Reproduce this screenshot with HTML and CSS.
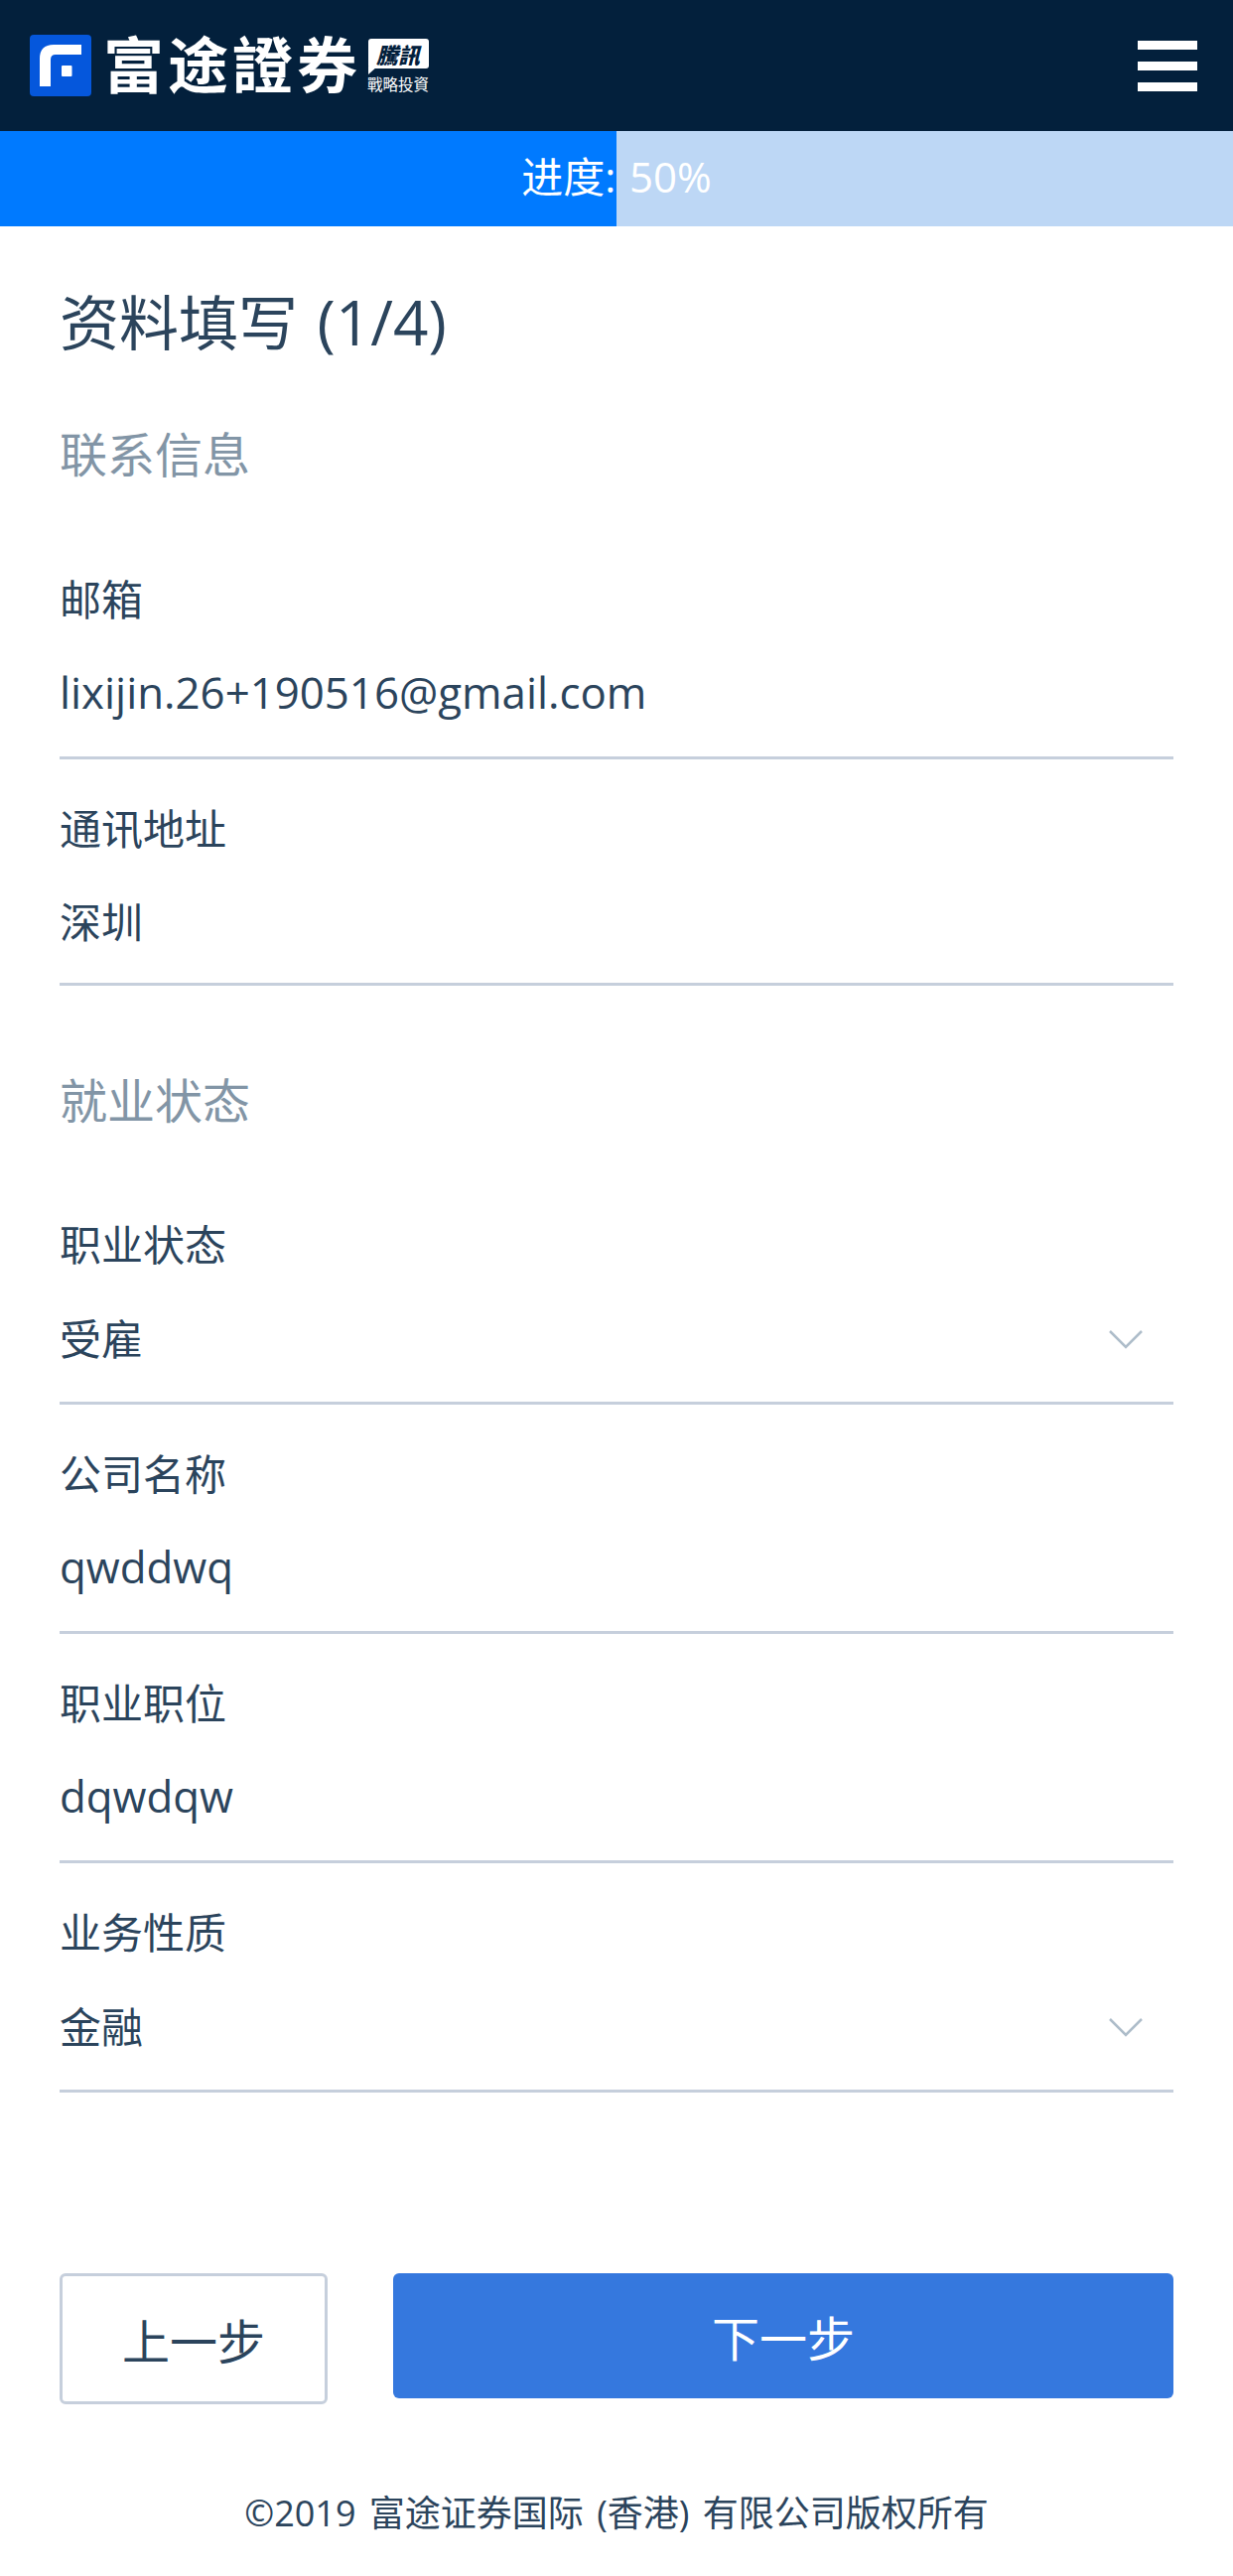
FILE: index.html
```html
<!DOCTYPE html>
<html lang="zh-CN">

<head>
    <meta charset="UTF-8">
    <meta name="viewport" content="width=device-width, initial-scale=1.0">
    <title>资料填写</title>
    <link rel="stylesheet" href="styles.css">
</head>

<body>
    <header class="topbar">
        <div class="brand">
            <svg class="brand-icon" viewBox="0 0 62 62" width="62" height="62">
                <rect width="62" height="62" rx="4" fill="#0557dc" />
                <path d="M10 52V24Q10 10 24 10H52V20H26Q21 20 21 25V52Z" fill="#fff" />
                <rect x="32" y="31" width="10.500" height="11" rx="1" fill="#fff" />
            </svg>
            <span class="brand-name">富途證券</span>
            <div class="brand-tag">
                <span class="tag-bubble">騰訊</span>
                <span class="tag-sub">戰略投資</span>
            </div>
        </div>
        <div class="menu-btn">
            <span></span>
            <span></span>
            <span></span>
        </div>
    </header>

    <div class="progress">进度: 50%</div>

    <main class="content">
        <h1>资料填写 <span class="step">(1/4)</span></h1>

        <h2 class="section-title">联系信息</h2>
        <div class="form-group">
            <label for="email">邮箱</label>
            <input class="latin" type="text" id="email" value="lixijin.26+190516@gmail.com">
        </div>
        <div class="form-group">
            <label for="address">通讯地址</label>
            <input class="short" type="text" id="address" value="深圳">
        </div>

        <h2 class="section-title section-second">就业状态</h2>
        <div class="form-group form-select">
            <label for="job-status">职业状态</label>
            <input type="text" id="job-status" value="受雇" readonly>
            <svg class="chevron" viewBox="0 0 34 19" width="34" height="19">
                <path d="M1 1L17 17L33 1" fill="none" stroke="#aebdca" stroke-width="2.500" />
            </svg>
        </div>
        <div class="form-group">
            <label for="company">公司名称</label>
            <input class="latin" type="text" id="company" value="qwddwq">
        </div>
        <div class="form-group">
            <label for="position">职业职位</label>
            <input class="latin" type="text" id="position" value="dqwdqw">
        </div>
        <div class="form-group form-select">
            <label for="business">业务性质</label>
            <input type="text" id="business" value="金融" readonly>
            <svg class="chevron" viewBox="0 0 34 19" width="34" height="19">
                <path d="M1 1L17 17L33 1" fill="none" stroke="#aebdca" stroke-width="2.500" />
            </svg>
        </div>

        <div class="form-button">
            <button class="btn-prev">上一步</button>
            <button class="btn-next">下一步</button>
        </div>
    </main>

    <footer>©2019 富途证券国际 (香港) 有限公司版权所有</footer>
</body>

</html>
```

FILE: styles.css
```css
:root {
    --text-color: #2b445c;
    --muted-color: #8295a6;
    --line-color: #c6cfdc;
    --blue: #3578de;
}

* {
    margin: 0;
    padding: 0;
    box-sizing: border-box;
}

body {
    font-family: "Open Sans", "Noto Sans CJK SC", sans-serif;
    color: var(--text-color);
    background: #fff;
    width: 1242px;
}

.topbar {
    height: 132px;
    background: #03203c;
    display: flex;
    align-items: center;
    justify-content: space-between;
    padding: 0 36px 0 30px;
}

.brand {
    display: flex;
    align-items: center;
}

.brand-icon {
    display: block;
}

.brand-name {
    margin-left: 12px;
    font-family: "Noto Sans CJK TC", sans-serif;
    font-weight: 700;
    font-size: 61px;
    line-height: 62px;
    letter-spacing: 4px;
    color: #fff;
    transform: translateY(-3px);
}

.brand-tag {
    margin-left: 6px;
    display: flex;
    flex-direction: column;
    align-items: center;
    width: 62px;
    color: #fff;
}

.tag-bubble {
    position: relative;
    width: 61px;
    height: 30px;
    background: #fff;
    border-radius: 3px;
    color: #03203c;
    font-family: "Noto Sans CJK TC", sans-serif;
    font-weight: 900;
    font-style: italic;
    font-size: 22px;
    line-height: 30px;
    text-align: center;
}

.tag-bubble::after {
    content: "";
    position: absolute;
    left: 0;
    top: 28px;
    border-right: 9px solid transparent;
    border-top: 8px solid #fff;
}

.tag-sub {
    margin-top: 6px;
    font-family: "Noto Sans CJK TC", sans-serif;
    font-size: 15.500px;
    line-height: 18px;
    white-space: nowrap;
}

.menu-btn {
    display: flex;
    flex-direction: column;
    gap: 12px;
    width: 60px;
}

.menu-btn span {
    display: block;
    height: 9px;
    background: #fff;
}

.progress {
    height: 96px;
    line-height: 92px;
    text-align: center;
    color: #fff;
    font-size: 42px;
    word-spacing: 3px;
    background: linear-gradient(to right, #007aff 50%, #bdd7f5 50%);
}

.content {
    padding: 0 60px;
}

h1 {
    font-size: 60px;
    font-weight: 400;
    line-height: 84px;
    margin-top: 54px;
    word-spacing: 4px;
}

h1 .step {
    font-size: 62px;
}

.section-title {
    font-size: 48px;
    font-weight: 400;
    line-height: 66px;
    color: var(--muted-color);
    margin-top: 58px;
    margin-bottom: 83px;
}

.section-second {
    margin-top: 83px;
    margin-bottom: 82px;
}

.form-group {
    position: relative;
    border-bottom: 3px solid var(--line-color);
    margin-bottom: 40px;
}

.form-group label {
    display: block;
    font-size: 42px;
    line-height: 60px;
}

.form-group input {
    display: block;
    width: 100%;
    height: 128px;
    padding-bottom: 3px;
    border: none;
    outline: none;
    background: transparent;
    font: inherit;
    font-size: 42px;
    color: var(--text-color);
}

.form-group input.latin {
    font-size: 43.800px;
}

.form-group input.short {
    height: 125px;
}

.chevron {
    position: absolute;
    right: 31px;
    bottom: 53px;
}

.form-button {
    display: flex;
    align-items: flex-start;
    gap: 66px;
    margin-top: 182px;
}

.form-button button {
    font: inherit;
    font-size: 48px;
    border-radius: 6px;
    cursor: pointer;
}

.btn-prev {
    width: 270px;
    height: 132px;
    background: #fff;
    border: 3px solid var(--line-color);
    color: var(--text-color);
}

.btn-next {
    flex: 1;
    height: 126px;
    background: var(--blue);
    border: none;
    color: #fff;
}

footer {
    text-align: center;
    font-size: 36px;
    line-height: 50px;
    word-spacing: 4px;
    margin-top: 85px;
    height: 88px;
}
```
